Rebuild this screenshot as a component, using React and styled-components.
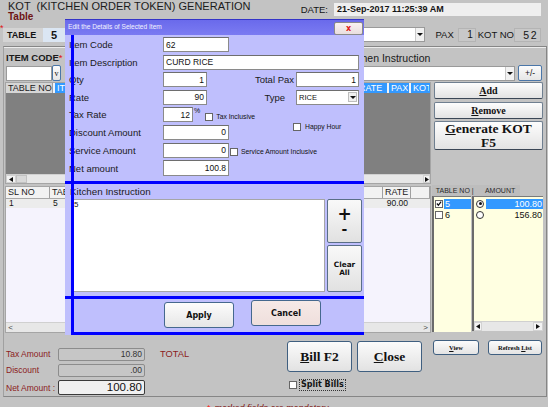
import React from "react";
import styled, { createGlobalStyle } from "styled-components";

const sans = `"Liberation Sans", Arial, sans-serif`;
const serif = `"Liberation Serif", "Times New Roman", serif`;
const verdana = `"DejaVu Sans", Verdana, sans-serif`;

const GlobalStyle = createGlobalStyle`
  html, body { margin: 0; padding: 0; background: #c3c3c3; }
  * { box-sizing: border-box; }
`;

const Screen = styled.div`
  position: relative;
  width: 548px;
  height: 407px;
  overflow: hidden;
  background: #c3c3c3;
  font-family: ${sans};
  color: #141414;
`;

/* ---------- header ---------- */
const Header = styled.header`
  display: flex;
  justify-content: space-between;
  height: 23px;
`;
const TitleBlock = styled.div`
  padding: 1px 0 0 8px;
`;
const Title = styled.h1`
  margin: 0;
  font-size: 11px;
  line-height: 11px;
  font-weight: normal;
  white-space: pre;
  color: #1b1b1b;
`;
const SubTitle = styled.div`
  font-size: 10px;
  line-height: 10px;
  font-weight: bold;
  color: #6e1414;
`;
const DateArea = styled.div`
  display: flex;
  align-items: center;
  gap: 6px;
  height: 13px;
  margin-top: 3px;
  padding-right: 7px;
`;
const DateLabel = styled.span`
  font-size: 9.5px;
`;
const DateBox = styled.div`
  width: 207px;
  height: 13px;
  background: #efefef;
  font-size: 9px;
  line-height: 13px;
  font-weight: bold;
  padding-left: 3px;
`;

/* ---------- table row ---------- */
const TableRow = styled.div`
  display: flex;
  align-items: center;
  height: 23px;
  padding: 4px 7px 4px 0;
`;
const Star = styled.span`
  width: 3px;
  align-self: flex-start;
  margin-top: -3px;
  font-size: 9px;
  line-height: 9px;
  color: #e01010;
`;
const TablePanel = styled.div`
  width: 40px;
  height: 14px;
  background: #d4d4d4;
  font-size: 9px;
  line-height: 14px;
  font-weight: bold;
  padding-left: 4px;
`;
const TableValue = styled.div`
  width: 22px;
  height: 14px;
  background: #dbe6f3;
  font-size: 11px;
  line-height: 14px;
  font-weight: bold;
  padding-left: 8px;
`;
const Combo = styled.div`
  display: flex;
  justify-content: flex-end;
  width: ${(p) => p.$w}px;
  height: 15px;
  margin-left: ${(p) => (p.$auto ? "auto" : "0")};
  margin-right: ${(p) => p.$mr || 0}px;
  background: #fff;
  border: 1px solid #9a9a9a;
`;
const ComboArrow = styled.span`
  display: flex;
  align-items: center;
  justify-content: center;
  width: 9px;
  background: #f1f1f1;
  border-left: 1px solid #c9c9c9;
  &::after {
    content: "";
    border-left: 3px solid transparent;
    border-right: 3px solid transparent;
    border-top: 3px solid #111;
  }
`;
const RowLabel = styled.span`
  font-size: 9.5px;
  margin-right: ${(p) => p.$mr || 0}px;
`;
const ReadBox = styled.div`
  width: ${(p) => p.$w}px;
  height: 14px;
  background: #c8c8c8;
  border: 1px solid #b4b4b4;
  text-align: right;
  font-size: ${(p) => p.$fs || 10}px;
  line-height: 12px;
  letter-spacing: ${(p) => p.$ls || 0}px;
  padding-right: 2px;
  margin-right: ${(p) => p.$mr || 0}px;
`;

/* ---------- main group ---------- */
const Group = styled.section`
  display: flex;
  flex-direction: column;
  margin: 0 1px 0 3px;
  height: 351px;
  border: 1px solid #868686;
  border-left-color: #a0a0a0;
  box-shadow: inset 0 1px 0 #ececec;
`;
const ItemCodeRow = styled.div`
  display: flex;
  height: 35px;
  padding: 0 4px 0 2px;
`;
const FieldColumn = styled.div`
  display: flex;
  flex-direction: column;
  margin-left: ${(p) => (p.$right ? "auto" : "0")};
`;
const FieldCaption = styled.div`
  margin-top: 6px;
  height: 10px;
  font-size: ${(p) => (p.$bold ? 9.5 : 10.5)}px;
  line-height: 10px;
  font-weight: ${(p) => (p.$bold ? "bold" : "normal")};
  white-space: nowrap;
  color: #1a1a1a;
`;
const RedStar = styled.span`
  color: #e01010;
  font-weight: normal;
  vertical-align: top;
`;
const InputGroup = styled.div`
  display: flex;
  align-items: flex-end;
  gap: ${(p) => p.$gap || 0}px;
  margin-top: 2px;
`;
const WhiteInput = styled.div`
  width: ${(p) => p.$w}px;
  height: 15px;
  background: #fff;
  border: 1px solid #9a9a9a;
`;
const SmallButton = styled.button`
  width: ${(p) => p.$w}px;
  height: ${(p) => p.$h}px;
  padding: 0;
  background: linear-gradient(#fbfbfb, #e6e6e6);
  border: 1px solid #4a76a8;
  border-radius: 2px;
  font-family: ${(p) => (p.$serif ? serif : sans)};
  font-size: ${(p) => p.$fs}px;
  color: #111;
`;

const MainArea = styled.div`
  display: flex;
  gap: 1px;
  height: 251px;
  padding-left: 1px;
`;
const LeftCol = styled.div`
  display: flex;
  flex-direction: column;
  gap: 2px;
  width: 426px;
`;
const GridFrame = styled.div`
  display: flex;
  flex-direction: column;
  height: ${(p) => p.$h}px;
  border: 1px solid #a5a5a5;
  background: ${(p) => (p.$dark ? "#808080" : "#f5f3fd")};
`;
const GridHeader = styled.div`
  display: flex;
  gap: ${(p) => (p.$dark ? 2 : 0)}px;
  height: ${(p) => p.$h}px;
  background: ${(p) => (p.$dark ? "#eef4fb" : "#f2f2f2")};
  border-bottom: 1px solid ${(p) => (p.$dark ? "#808080" : "#a8a8a8")};
`;
const HeadCell = styled.div`
  flex: none;
  width: ${(p) => p.$w}px;
  font-size: 9px;
  line-height: ${(p) => p.$lh}px;
  padding-left: 2px;
  white-space: nowrap;
  overflow: hidden;
  color: ${(p) => (p.$blue ? "#fff" : "#222")};
  background: ${(p) => (p.$blue ? "#3399ff" : p.$plain ? "#f2f2f2" : "#d6d6d6")};
  border-right: 1px solid ${(p) => (p.$blue ? "#3399ff" : "#a0a0a0")};
`;
const GridBody = styled.div`
  flex: 1;
`;
const GridRow = styled.div`
  display: flex;
  height: 9px;
  background: #ececec;
`;
const RowCell = styled.div`
  flex: none;
  width: ${(p) => p.$w}px;
  font-size: 8.5px;
  line-height: 9px;
  padding: 0 3px;
  text-align: ${(p) => (p.$right ? "right" : "left")};
  white-space: nowrap;
  overflow: hidden;
`;
const ScrollBar = styled.div`
  display: flex;
  align-items: stretch;
  height: ${(p) => p.$h}px;
  background: #e7e7e7;
  border-top: 1px solid #d0d0d0;
`;
const ScrollButton = styled.span`
  display: flex;
  align-items: center;
  justify-content: center;
  width: ${(p) => p.$w}px;
  background: ${(p) => (p.$flat ? "transparent" : "#f3f3f3")};
  border: ${(p) => (p.$flat ? "none" : "1px solid #d2d2d2")};
  font-size: 8px;
  color: #444;
`;
const ScrollThumb = styled.span`
  width: ${(p) => p.$w}px;
  background: #d9d9d9;
  border: 1px solid #c2c2c2;
`;
const ScrollTrack = styled.span`
  flex: 1;
`;

const RightCol = styled.div`
  display: flex;
  flex-direction: column;
  width: 111px;
`;
const SideButton = styled.button`
  width: 109px;
  height: ${(p) => p.$h}px;
  margin: ${(p) => p.$mt}px 0 0 2px;
  padding: 0;
  background: linear-gradient(#fdfdfd, #e3e3e3);
  border: 1px solid #6f7f90;
  border-bottom-color: #3b4756;
  border-radius: 2px;
  font-family: ${serif};
  font-weight: bold;
  font-size: ${(p) => p.$fs}px;
  line-height: ${(p) => p.$lh || p.$fs}px;
  color: #111;
`;
const ListHead = styled.div`
  display: flex;
  align-items: center;
  width: 88px;
  height: 11px;
  margin-top: 35px;
  background: #bdbdbd;
  font-size: 7px;
  color: #2a2a2a;
  white-space: pre;
`;
const ListPair = styled.div`
  display: flex;
  gap: 1px;
  height: 136px;
`;
const ListBox = styled.div`
  display: flex;
  flex-direction: column;
  width: ${(p) => p.$w}px;
  height: ${(p) => p.$h}px;
  background: #ffffe1;
  border-left: 2px solid #6b6b6b;
  border-top: 1px solid #7a7a7a;
  padding: 1px 0 0 ${(p) => p.$pl}px;
`;
const ListRow = styled.div`
  display: flex;
  align-items: center;
  gap: 1px;
  height: 11px;
  padding-left: ${(p) => p.$pl || 0}px;
`;
const ListText = styled.span`
  flex: 1;
  height: 10px;
  padding: 0 1px;
  font-size: 9px;
  line-height: 10px;
  text-align: ${(p) => (p.$right ? "right" : "left")};
  background: ${(p) => (p.$selected ? "#3399ff" : "transparent")};
  color: ${(p) => (p.$selected ? "#fff" : "#111")};
`;
const ListFill = styled.div`
  flex: 1;
`;
const CheckBox = styled.span`
  display: inline-flex;
  align-items: center;
  justify-content: center;
  flex: none;
  width: 8px;
  height: 8px;
  background: #fff;
  border: 1px solid #666;
`;
const RadioBox = styled.span`
  display: inline-flex;
  align-items: center;
  justify-content: center;
  flex: none;
  width: 8px;
  height: 8px;
  margin-right: 1px;
  border-radius: 50%;
  background: #fff;
  border: 1px solid #333;
`;
const RadioDot = styled.span`
  width: 3px;
  height: 3px;
  border-radius: 50%;
  background: #111;
`;

/* ---------- bottom ---------- */
const BottomArea = styled.div`
  display: flex;
  height: 63px;
  padding-left: 2px;
`;
const Totals = styled.div`
  display: grid;
  grid-template-columns: 52px 87px;
  row-gap: 2px;
  align-items: center;
  width: 139px;
  margin-top: 14px;
`;
const TotalLabel = styled.span`
  font-size: 8.5px;
  color: #8b1c1c;
  white-space: nowrap;
`;
const TotalField = styled.div`
  height: ${(p) => (p.$strong ? 15 : 13)}px;
  background: ${(p) => (p.$strong ? "#f0f0f0" : "#c6c6c6")};
  border: ${(p) => (p.$strong ? "1.5px solid #3a3a3a" : "1px solid #8c8c8c")};
  border-radius: 2px;
  text-align: right;
  padding-right: 2px;
  font-size: ${(p) => (p.$strong ? 11.5 : 8.5)}px;
  line-height: ${(p) => (p.$strong ? 13 : 11)}px;
  color: ${(p) => (p.$strong ? "#111" : "#333")};
`;
const TotalTitle = styled.div`
  width: 127px;
  margin: 16px 0 0 15px;
  font-size: 9.3px;
  line-height: 10px;
  color: #8b1c1c;
`;
const BillBlock = styled.div`
  display: flex;
  flex-direction: column;
  width: 135px;
`;
const BillRow = styled.div`
  display: flex;
  gap: 5px;
  margin-top: 8px;
`;
const BigButton = styled.button`
  width: 65px;
  height: 31px;
  padding: 0;
  background: linear-gradient(#fbfbfb, #e2e2e2);
  border: 1px solid #3f5f80;
  border-radius: 3px;
  font-family: ${serif};
  font-weight: bold;
  font-size: 13.5px;
  color: #111;
`;
const SplitRow = styled.label`
  display: flex;
  align-items: center;
  gap: 2px;
  margin: 7px 0 0 2px;
`;
const FocusText = styled.span`
  border: 1px dotted #333;
  padding: 0 1px;
  font-family: ${verdana};
  font-weight: bold;
  font-size: 8px;
  line-height: 10px;
`;
const ViewBlock = styled.div`
  display: flex;
  gap: 9px;
  margin: 7px 0 0 11px;
`;
const TinyButton = styled.button`
  width: ${(p) => p.$w}px;
  height: 15px;
  padding: 0;
  background: linear-gradient(#fbfbfb, #e4e4e4);
  border: 1px solid #3f5f80;
  border-radius: 3px;
  font-family: ${serif};
  font-weight: bold;
  font-size: 6.5px;
  color: #111;
`;

const Footer = styled.div`
  padding: 6px 0 0 207px;
  font-size: 9px;
  line-height: 10px;
  font-style: italic;
  color: #7d1010;
`;
const FootStar = styled.span`
  font-style: normal;
  color: #ff2020;
  margin-right: 4px;
`;

/* ---------- dialog ---------- */
const Dialog = styled.div`
  position: absolute;
  left: 65px;
  top: 19px;
  width: 299px;
  height: 316px;
  display: flex;
  flex-direction: column;
  background: #bfbffd;
  font-family: ${sans};
`;
const TitleBar = styled.div`
  display: flex;
  justify-content: space-between;
  align-items: flex-start;
  height: 16px;
  background: linear-gradient(#6a6aeb, #7b7bf2);
  border-top: 1px solid #3434c8;
`;
const DialogTitle = styled.span`
  padding: 3px 0 0 3px;
  font-size: 6.6px;
  line-height: 8px;
  color: #f2f2ff;
`;
const CloseButton = styled.button`
  width: 29px;
  height: 13px;
  margin: 2px 1px 0 0;
  padding: 0;
  background: linear-gradient(#faf2f2, #e9dede);
  border: 1px solid #8a8a8a;
  border-radius: 2px;
  font-family: ${verdana};
  font-weight: bold;
  font-size: 8px;
  line-height: 10px;
  color: #e01818;
`;
const DialogBody = styled.div`
  position: relative;
  flex: 1;
  display: flex;
  flex-direction: column;
`;
const BlueRule = styled.div`
  position: absolute;
  left: 6px;
  top: 0;
  bottom: 0;
  width: 3px;
  background: #0000ff;
`;
const Fields = styled.div`
  display: flex;
  flex-direction: column;
  gap: 2.6px;
  height: 146px;
  padding: 2px 0 0 4px;
`;
const FieldRow = styled.div`
  display: flex;
  align-items: center;
  height: ${(p) => p.$h || 15}px;
`;
const FieldLabel = styled.span`
  flex: none;
  width: ${(p) => p.$w || 94}px;
  padding-right: ${(p) => p.$pr || 0}px;
  text-align: ${(p) => (p.$right ? "right" : "left")};
  font-size: 9.5px;
  color: #1a1a1a;
  white-space: nowrap;
`;
const TextBox = styled.div`
  display: flex;
  align-items: center;
  justify-content: ${(p) => (p.$right ? "flex-end" : "space-between")};
  flex: none;
  width: ${(p) => p.$w}px;
  height: 100%;
  padding: 0 ${(p) => (p.$select ? 1 : 2)}px 0 2px;
  background: #fff;
  border: 1px solid #8a8a8a;
  border-top-color: #6e6e6e;
  font-size: ${(p) => (p.$select ? 7.5 : 8.5)}px;
  color: #111;
`;
const SelectArrow = styled.span`
  display: flex;
  align-items: center;
  justify-content: center;
  width: 9px;
  height: 10px;
  background: #f0f0f0;
  border: 1px solid #bdbdbd;
  &::after {
    content: "";
    border-left: 3px solid transparent;
    border-right: 3px solid transparent;
    border-top: 3px solid #111;
  }
`;
const Percent = styled.span`
  margin-left: 1px;
  font-size: 7px;
  align-self: flex-start;
`;
const CheckOption = styled.span`
  display: flex;
  align-items: center;
  gap: ${(p) => p.$gap || 3}px;
  align-self: flex-start;
  margin: ${(p) => p.$mt}px 0 0 ${(p) => p.$ml}px;
  font-size: 6.8px;
  line-height: 8px;
  white-space: nowrap;
  color: #111;
`;
const KitchenSection = styled.div`
  display: flex;
  flex-direction: column;
  height: 115px;
  padding: 0 1px 4px 7px;
  border-top: 3px solid #0000ff;
`;
const KitchenLabel = styled.div`
  height: 15px;
  margin-left: -2px;
  font-size: 9.8px;
  line-height: 15px;
  color: #1a1a1a;
`;
const EditorRow = styled.div`
  display: flex;
  gap: 2px;
  height: 93px;
`;
const NoteArea = styled.div`
  width: 253px;
  background: #fff;
  border: 1px solid #a6a6a6;
  padding: 1px 1px;
  font-size: 8px;
  line-height: 8px;
`;
const NoteButtons = styled.div`
  display: flex;
  flex-direction: column;
  gap: 2px;
  width: 35px;
`;
const NoteButton = styled.button`
  display: flex;
  flex-direction: column;
  align-items: center;
  justify-content: center;
  height: ${(p) => p.$h}px;
  padding: 0;
  background: linear-gradient(#f9f9f9, #e1e1e1);
  border: 1px solid #5a6f87;
  border-radius: 2px;
  font-family: ${verdana};
  font-weight: bold;
  color: #111;
`;
const PlusMinus = styled.span`
  font-size: ${(p) => p.$fs}px;
  line-height: ${(p) => p.$lh}px;
`;
const ClearText = styled.span`
  font-size: 7.3px;
  line-height: 8px;
`;
const ActionSection = styled.div`
  height: 39px;
  border-top: 3px solid #0000ff;
`;
const ActionRow = styled.div`
  display: flex;
  align-items: flex-start;
  gap: 17px;
  height: 36px;
  margin-left: 7px;
  padding-left: 92px;
  border-bottom: 3px solid #0000ff;
`;
const ActionButton = styled.button`
  width: 70px;
  height: 26px;
  margin-top: ${(p) => p.$mt}px;
  padding: 0;
  background: ${(p) =>
    p.$cancel
      ? "linear-gradient(#f6e9e7, #efdfdc)"
      : "linear-gradient(#fcfcfc, #e6e6e6)"};
  border: 1px solid #45688e;
  border-radius: 3px;
  font-family: ${verdana};
  font-weight: bold;
  font-size: 8px;
  color: #111;
`;

/* ---------- small drawings ---------- */
const Tick = () => (
  <svg width="7" height="7" viewBox="0 0 7 7">
    <polyline points="1,3.5 2.8,5.5 6,1.2" fill="none" stroke="#111" strokeWidth="1.4" />
  </svg>
);
const Tri = ({ dir }) => (
  <svg width="4" height="5" viewBox="0 0 4 5">
    <polygon points={dir === "left" ? "4,0 4,5 0,2.5" : "0,0 0,5 4,2.5"} fill="#111" />
  </svg>
);

const topColumns = [
  { label: "TABLE NO", w: 47 },
  { label: "ITEM CODE", w: 70, blue: true },
  { label: "ITEM NAME", w: 148, blue: true },
  { label: "QTY", w: 36, blue: true },
  { label: "UNIT", w: 40, blue: true },
  { label: "RATE", w: 30, blue: true },
  { label: "PAX", w: 20, blue: true },
  { label: "KOT", w: 19, blue: true },
];

const itemColumns = [
  { label: "SL NO", w: 44, value: "1" },
  { label: "TABLE NO", w: 44, value: "5" },
  { label: "ITEM NAME", w: 190, value: "CURD RICE" },
  { label: "QTY", w: 45, value: "1", right: true },
  { label: "UNIT", w: 54, value: "" },
  { label: "RATE", w: 28, value: "90.00", right: true },
  { label: "", w: 19, value: "" },
];

export default function App() {
  return (
    <>
      <GlobalStyle />
      <Screen>
        <Header>
          <TitleBlock>
            <Title>{"KOT  (KITCHEN ORDER TOKEN) GENERATION"}</Title>
            <SubTitle>Table</SubTitle>
          </TitleBlock>
          <DateArea>
            <DateLabel>DATE:</DateLabel>
            <DateBox>21-Sep-2017 11:25:39 AM</DateBox>
          </DateArea>
        </Header>

        <TableRow>
          <Star>*</Star>
          <TablePanel>TABLE</TablePanel>
          <TableValue>5</TableValue>
          <Combo $w={130} $auto $mr={10}>
            <ComboArrow />
          </Combo>
          <RowLabel $mr={4}>PAX</RowLabel>
          <ReadBox $w={18} $mr={2}>1</ReadBox>
          <RowLabel>KOT NO</RowLabel>
          <ReadBox $w={27} $fs={10.5} $ls={1.5}>52</ReadBox>
        </TableRow>

        <Group>
          <ItemCodeRow>
            <FieldColumn>
              <FieldCaption $bold>
                ITEM CODE<RedStar>*</RedStar>
              </FieldCaption>
              <InputGroup>
                <WhiteInput $w={46} />
                <SmallButton $w={9} $h={16} $fs={8} $serif>
                  v
                </SmallButton>
              </InputGroup>
            </FieldColumn>
            <FieldColumn $right>
              <FieldCaption>Kitchen Instruction</FieldCaption>
              <InputGroup $gap={3}>
                <Combo $w={171}>
                  <ComboArrow />
                </Combo>
                <SmallButton $w={24} $h={16} $fs={8.5}>
                  +/-
                </SmallButton>
              </InputGroup>
            </FieldColumn>
          </ItemCodeRow>

          <MainArea>
            <LeftCol>
              <GridFrame $h={102} $dark>
                <GridHeader $h={11} $dark>
                  {topColumns.map((c) => (
                    <HeadCell key={c.label} $w={c.w} $lh={10} $blue={c.blue}>
                      {c.label}
                    </HeadCell>
                  ))}
                </GridHeader>
                <GridBody />
                <ScrollBar $h={9}>
                  <ScrollButton $w={10}>
                    <Tri dir="left" />
                  </ScrollButton>
                  <ScrollThumb $w={11} />
                  <ScrollTrack />
                  <ScrollButton $w={7}>
                    <Tri dir="right" />
                  </ScrollButton>
                </ScrollBar>
              </GridFrame>

              <GridFrame $h={147}>
                <GridHeader $h={12}>
                  {itemColumns.map((c) => (
                    <HeadCell key={c.label + c.w} $w={c.w} $lh={11} $plain>
                      {c.label}
                    </HeadCell>
                  ))}
                </GridHeader>
                <GridBody>
                  <GridRow>
                    {itemColumns.map((c) => (
                      <RowCell key={c.label + c.w} $w={c.w} $right={c.right}>
                        {c.value}
                      </RowCell>
                    ))}
                  </GridRow>
                </GridBody>
                <ScrollBar $h={10}>
                  <ScrollButton $w={9} $flat>
                    &lt;
                  </ScrollButton>
                  <ScrollTrack />
                  <ScrollButton $w={9} $flat>
                    &gt;
                  </ScrollButton>
                </ScrollBar>
              </GridFrame>
            </LeftCol>

            <RightCol>
              <SideButton $h={17} $mt={0} $fs={10}>
                <u>A</u>dd
              </SideButton>
              <SideButton $h={17} $mt={3} $fs={10}>
                <u>R</u>emove
              </SideButton>
              <SideButton $h={29} $mt={2} $fs={13.5} $lh={14}>
                <u>G</u>enerate KOT
                <br />
                F5
              </SideButton>
              <ListHead>{"  TABLE NO |      AMOUNT"}</ListHead>
              <ListPair>
                <ListBox $w={39} $h={136} $pl={1}>
                  <ListRow>
                    <CheckBox>
                      <Tick />
                    </CheckBox>
                    <ListText $selected>5</ListText>
                  </ListRow>
                  <ListRow>
                    <CheckBox />
                    <ListText>6</ListText>
                  </ListRow>
                </ListBox>
                <ListBox $w={71} $h={135} $pl={0}>
                  <ListRow $pl={2}>
                    <RadioBox>
                      <RadioDot />
                    </RadioBox>
                    <ListText $selected $right>
                      100.80
                    </ListText>
                  </ListRow>
                  <ListRow $pl={2}>
                    <RadioBox />
                    <ListText $right>156.80</ListText>
                  </ListRow>
                  <ListFill />
                  <ScrollBar $h={10}>
                    <ScrollButton $w={8}>
                      <Tri dir="left" />
                    </ScrollButton>
                    <ScrollTrack />
                    <ScrollButton $w={10}>
                      <Tri dir="right" />
                    </ScrollButton>
                  </ScrollBar>
                </ListBox>
              </ListPair>
            </RightCol>
          </MainArea>

          <BottomArea>
            <Totals>
              <TotalLabel>Tax Amount</TotalLabel>
              <TotalField>10.80</TotalField>
              <TotalLabel>Discount</TotalLabel>
              <TotalField>.00</TotalField>
              <TotalLabel>Net Amount :</TotalLabel>
              <TotalField $strong>100.80</TotalField>
            </Totals>
            <TotalTitle>TOTAL</TotalTitle>
            <BillBlock>
              <BillRow>
                <BigButton>
                  <u>B</u>ill F2
                </BigButton>
                <BigButton>
                  <u>C</u>lose
                </BigButton>
              </BillRow>
              <SplitRow>
                <CheckBox />
                <FocusText>Split Bills</FocusText>
              </SplitRow>
            </BillBlock>
            <ViewBlock>
              <TinyButton $w={46}>
                <u>V</u>iew
              </TinyButton>
              <TinyButton $w={54}>
                Refresh <u>L</u>ist
              </TinyButton>
            </ViewBlock>
          </BottomArea>
        </Group>

        <Footer>
          <FootStar>*</FootStar>marked fields are mandatory
        </Footer>

        <Dialog>
          <TitleBar>
            <DialogTitle>Edit the Details of Selected Item</DialogTitle>
            <CloseButton>x</CloseButton>
          </TitleBar>
          <DialogBody>
            <Fields>
              <FieldRow>
                <FieldLabel>Item Code</FieldLabel>
                <TextBox $w={66}>62</TextBox>
              </FieldRow>
              <FieldRow>
                <FieldLabel>Item Description</FieldLabel>
                <TextBox $w={196}>CURD RICE</TextBox>
              </FieldRow>
              <FieldRow>
                <FieldLabel>Qty</FieldLabel>
                <TextBox $w={44} $right>
                  1
                </TextBox>
                <FieldLabel $w={89} $pr={2} $right>
                  Total Pax
                </FieldLabel>
                <TextBox $w={63} $right>
                  1
                </TextBox>
              </FieldRow>
              <FieldRow>
                <FieldLabel>Rate</FieldLabel>
                <TextBox $w={44} $right>
                  90
                </TextBox>
                <FieldLabel $w={89} $pr={11} $right>
                  Type
                </FieldLabel>
                <TextBox $w={63} $select>
                  RICE
                  <SelectArrow />
                </TextBox>
              </FieldRow>
              <FieldRow>
                <FieldLabel>Tax Rate</FieldLabel>
                <TextBox $w={30} $right>
                  12
                </TextBox>
                <Percent>%</Percent>
                <CheckOption $mt={6} $ml={5}>
                  <CheckBox />
                  Tax Inclusive
                </CheckOption>
              </FieldRow>
              <FieldRow>
                <FieldLabel>Discount Amount</FieldLabel>
                <TextBox $w={66} $right>
                  0
                </TextBox>
                <CheckOption $mt={-2} $ml={64} $gap={4}>
                  <CheckBox />
                  Happy Hour
                </CheckOption>
              </FieldRow>
              <FieldRow>
                <FieldLabel>Service Amount</FieldLabel>
                <TextBox $w={66} $right>
                  0
                </TextBox>
                <CheckOption $mt={5} $ml={1}>
                  <CheckBox />
                  Service Amount Inclusive
                </CheckOption>
              </FieldRow>
              <FieldRow $h={16}>
                <FieldLabel>Net amount</FieldLabel>
                <TextBox $w={66} $right>
                  100.8
                </TextBox>
              </FieldRow>
            </Fields>

            <KitchenSection>
              <KitchenLabel>Kitchen Instruction</KitchenLabel>
              <EditorRow>
                <NoteArea>5</NoteArea>
                <NoteButtons>
                  <NoteButton $h={44}>
                    <PlusMinus $fs={17} $lh={16}>+</PlusMinus>
                    <PlusMinus $fs={14} $lh={14}>-</PlusMinus>
                  </NoteButton>
                  <NoteButton $h={47}>
                    <ClearText>Clear</ClearText>
                    <ClearText>All</ClearText>
                  </NoteButton>
                </NoteButtons>
              </EditorRow>
            </KitchenSection>

            <ActionSection>
              <ActionRow>
                <ActionButton $mt={3}>Apply</ActionButton>
                <ActionButton $mt={1} $cancel>
                  Cancel
                </ActionButton>
              </ActionRow>
            </ActionSection>

            <BlueRule />
          </DialogBody>
        </Dialog>
      </Screen>
    </>
  );
}
